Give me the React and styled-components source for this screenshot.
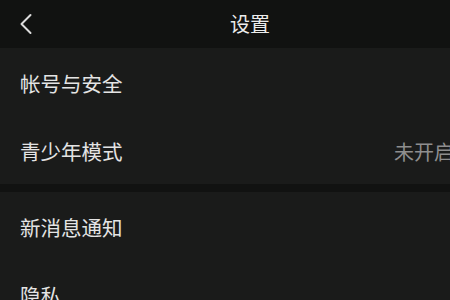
import React from 'react'
import styled, { createGlobalStyle } from 'styled-components'

const GlobalStyle = createGlobalStyle`
  html, body {
    margin: 0;
    padding: 0;
    background: #1a1b1a;
    overflow: hidden;
  }
  * { box-sizing: border-box; }
`

const Screen = styled.div`
  width: 500px;
  min-height: 300px;
  background: #1a1b1a;
  font-family: "Noto Sans CJK SC", "Noto Sans", sans-serif;
  color: #e4e4e4;
`

const Header = styled.header`
  height: 48px;
  background: #111211;
  display: grid;
  grid-template-columns: 60px 1fr 60px;
  align-items: center;
`

const BackButton = styled.button`
  background: none;
  border: none;
  padding: 0 0 0 19px;
  height: 48px;
  display: flex;
  align-items: center;
  color: #dcdcdc;
  cursor: pointer;
`

const Title = styled.h1`
  margin: 0;
  text-align: center;
  font-size: 20px;
  font-weight: 400;
  line-height: 46px;
  color: #ececec;
`

const Group = styled.section`
  background: #1a1b1a;
`

const Gap = styled.div`
  height: 8px;
  background: #111211;
`

const Row = styled.div`
  height: 68px;
  display: flex;
  align-items: center;
  justify-content: space-between;
  padding: 2px 20px 0 20px;
`

const Label = styled.span`
  font-size: 20.5px;
  color: #e4e4e4;
`

const Value = styled.span`
  display: flex;
  align-items: center;
  gap: 18px;
  font-size: 20px;
  color: #8e8e8e;
`

const groups = [
  [
    { label: '帐号与安全' },
    { label: '青少年模式', value: '未开启' },
  ],
  [
    { label: '新消息通知' },
    { label: '隐私' },
  ],
]

const App = () => {
  return (
    <Screen>
      <GlobalStyle />
      <Header>
        <BackButton aria-label="返回">
          <svg width="14" height="22" viewBox="0 0 14 22" fill="none">
            <path d="M11.5 2 L2.5 11 L11.5 20" stroke="currentColor" strokeWidth="2" strokeLinecap="round" strokeLinejoin="round" />
          </svg>
        </BackButton>
        <Title>设置</Title>
        <span />
      </Header>
      {groups.map((items, gi) => (
        <React.Fragment key={gi}>
          {gi > 0 && <Gap />}
          <Group>
            {items.map((item) => (
              <Row key={item.label}>
                <Label>{item.label}</Label>
                {item.value && (
                  <Value>
                    {item.value}
                    <svg width="8" height="14" viewBox="0 0 8 14" fill="none">
                      <path d="M1 1 L7 7 L1 13" stroke="currentColor" strokeWidth="1.5" />
                    </svg>
                  </Value>
                )}
              </Row>
            ))}
          </Group>
        </React.Fragment>
      ))}
    </Screen>
  )
}

export default App
